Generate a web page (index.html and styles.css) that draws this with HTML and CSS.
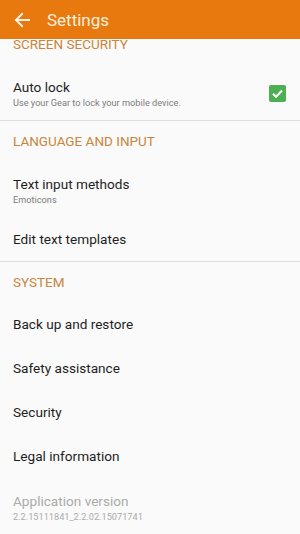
FILE: index.html
```html
<!DOCTYPE html>
<html>
<head>
<meta charset="utf-8">
<link rel="stylesheet" href="styles.css">
</head>
<body>
<div class="app">
  <header class="appbar">
    <svg class="back" width="18" height="18" viewBox="0 0 18 18">
      <path d="M16 9H3M9 3L3 9l6 6" fill="none" stroke="#fdf0e2" stroke-width="2" stroke-linecap="square"/>
    </svg>
    <span class="title">Settings</span>
  </header>
  <main class="list">
    <section class="section first">
      <div class="sec-head"><span>SCREEN SECURITY</span></div>
      <div class="row two">
        <div class="texts">
          <div class="main">Auto lock</div>
          <div class="sub">Use your Gear to lock your mobile device.</div>
        </div>
        <span class="check">
          <svg width="17" height="17" viewBox="0 0 17 17"><rect width="17" height="17" rx="2" fill="#4caf50"/><path d="M4 8.8l3 3 6-6.3" fill="none" stroke="#fff" stroke-width="2"/></svg>
        </span>
      </div>
    </section>
    <section class="section">
      <div class="sec-head"><span>LANGUAGE AND INPUT</span></div>
      <div class="row two">
        <div class="texts">
          <div class="main">Text input methods</div>
          <div class="sub">Emoticons</div>
        </div>
      </div>
      <div class="row"><div class="main">Edit text templates</div></div>
    </section>
    <section class="section">
      <div class="sec-head"><span>SYSTEM</span></div>
      <div class="row"><div class="main">Back up and restore</div></div>
      <div class="row"><div class="main">Safety assistance</div></div>
      <div class="row"><div class="main">Security</div></div>
      <div class="row"><div class="main">Legal information</div></div>
      <div class="row two disabled">
        <div class="texts">
          <div class="main">Application version</div>
          <div class="sub">2.2.15111841_2.2.02.15071741</div>
        </div>
      </div>
    </section>
  </main>
</div>
</body>
</html>
```
FILE: styles.css
```css
* { box-sizing: border-box; }
html, body { margin: 0; padding: 0; }
body {
  width: 300px;
  height: 534px;
  overflow: hidden;
  background: #fafafa;
  font-family: Roboto, "Noto Sans", sans-serif;
}
.app { display: flex; flex-direction: column; height: 534px; }
.appbar {
  height: 39px;
  flex: none;
  background: #e8790f;
  display: flex;
  align-items: center;
  padding-left: 13px;
  gap: 16px;
  position: relative;
  z-index: 1;
}
.back { display: block; }
.title {
  color: #fdeede;
  font-size: 17px;
  font-weight: 400;
}
.list { flex: 1; overflow: hidden; }
.section { border-top: 1px solid #dedede; }
.section.first { border-top: none; }
.sec-head {
  height: 40px;
  display: flex;
  align-items: center;
  padding-left: 13px;
  color: #c88640;
  font-size: 13.5px;
}
.section.first .sec-head { margin-top: -15px; }
.row {
  height: 44px;
  display: flex;
  align-items: center;
  padding: 0 13px;
}
.row.two { height: 56px; justify-content: space-between; padding-top: 2px; }
.main { color: #1e1e1e; font-size: 13.6px; }
.sub { color: #7c7c7c; font-size: 9.2px; margin-top: 2px; }
.texts { display: flex; flex-direction: column; }
.check { display: flex; margin-right: 1px; }
.disabled .main, .disabled .sub { color: #ababab; }
```
